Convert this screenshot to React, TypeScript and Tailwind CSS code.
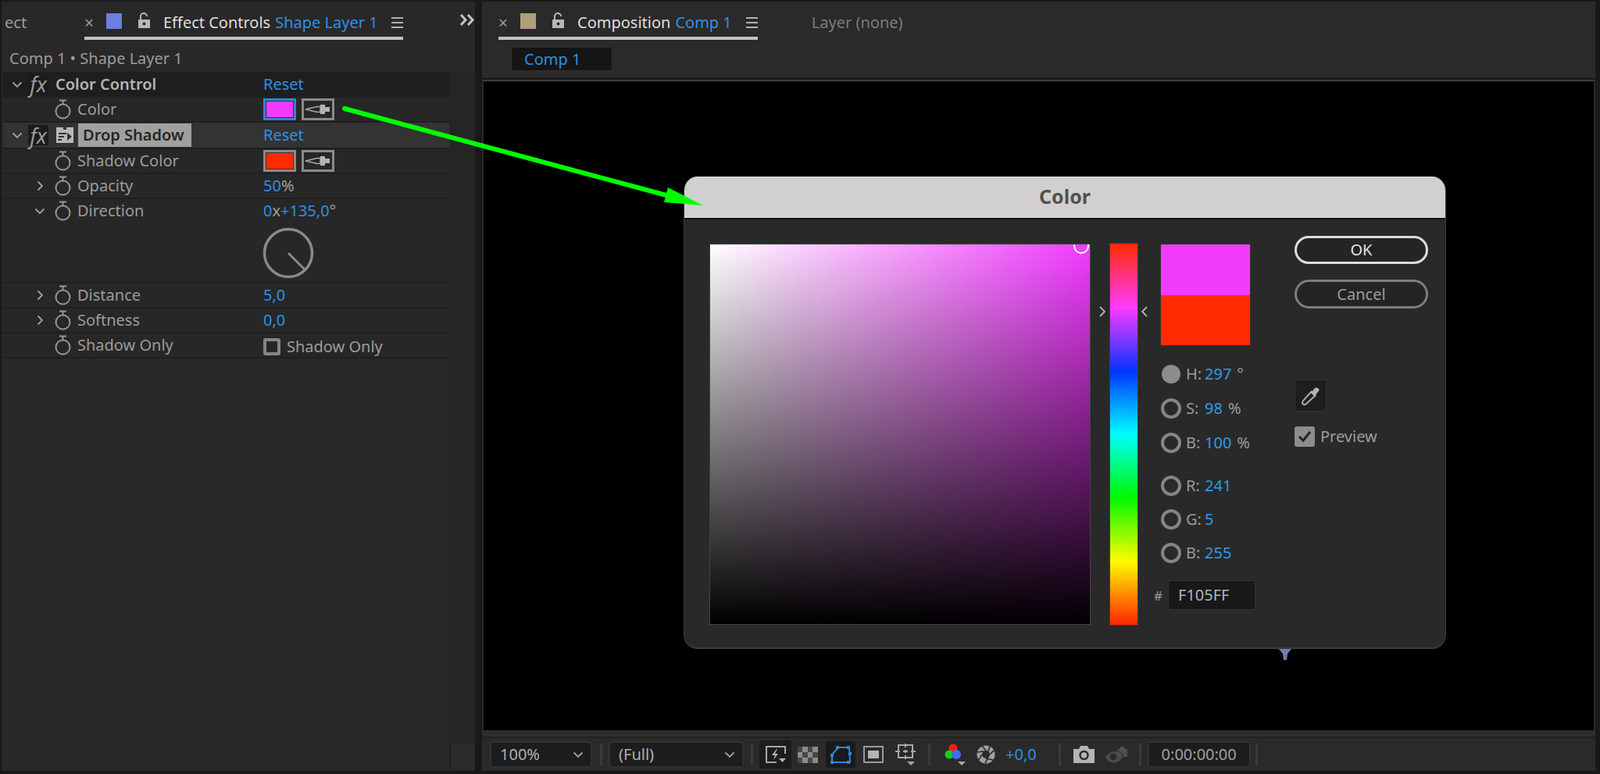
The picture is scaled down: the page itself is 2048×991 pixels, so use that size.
import type { ReactNode } from "react";

function Stopwatch() {
  return (
    <svg width="21" height="26" viewBox="0 0 21 26" fill="none" stroke="#979797" strokeWidth="2">
      <circle cx="10.5" cy="15.5" r="9" />
      <path d="M6 1.5h9M10.5 1.5v5" />
    </svg>
  );
}

function Chevron({ down }: { down?: boolean }) {
  return (
    <svg width="14" height="14" viewBox="0 0 14 14" fill="none" stroke="#a0a0a0" strokeWidth="1.8">
      {down ? <path d="M1.5 4.5 7 10l5.5-5.5" /> : <path d="M4.5 1.5 10 7l-5.5 5.5" />}
    </svg>
  );
}

function Fx() {
  return (
    <div className="w-[26px] h-[26px] bg-[#1b1b1b] flex items-center justify-center font-['Liberation_Serif',serif] italic text-[27px] leading-none text-[#9a9a9a]">
      fx
    </div>
  );
}

function Pipette() {
  return (
    <div className="w-[42px] h-[28px] border-[3px] border-[#8a8a8a] flex items-center justify-center">
      <svg width="34" height="18" viewBox="0 0 34 18" fill="none">
        <path d="M1 9 16 5.500h4v7h-4z" stroke="#a8a8a8" strokeWidth="1.5" />
        <path d="M20 3h6v3h6v6h-6v3h-6z" fill="#b4b4b4" />
      </svg>
    </div>
  );
}

function Swatch({ color, active }: { color: string; active?: boolean }) {
  const border = active ? "border-[#2d86d8]" : "border-[#8a8a8a]";
  return (
    <div className={`w-[42px] h-[28px] border-[3px] ${border}`}>
      <div className="w-full h-full border border-[#333]" style={{ background: color }} />
    </div>
  );
}

function Row({ h, bg, children }: { h: string; bg?: string; children: ReactNode }) {
  return <div className={`${h} ${bg ?? "bg-[#272727]"} border-b-2 border-[#1f1f1f] flex items-start shrink-0`}>{children}</div>;
}

function Prop({ label, chevron, h = "h-[32px]", children }: { label: string; chevron?: "right" | "down"; h?: string; children?: ReactNode }) {
  return (
    <Row h={h}>
      <div className="w-[66px] h-[30px] pl-[40px] flex items-center shrink-0">
        {chevron && <Chevron down={chevron === "down"} />}
      </div>
      <div className="w-[29px] h-[30px] flex items-center shrink-0">
        <Stopwatch />
      </div>
      <div className="w-[238px] h-[30px] flex items-center text-[#9c9c9c] shrink-0">{label}</div>
      <div className="h-[30px] flex items-center gap-[7px]">{children}</div>
    </Row>
  );
}

function Blue({ children }: { children: ReactNode }) {
  return <span className="text-[#2e90e4]">{children}</span>;
}

function EffectControls() {
  return (
    <div className="flex-1 flex flex-col min-h-0">
      <Row h="h-[33px]" bg="bg-[#1e1e1e]">
        <div className="w-[32px] h-[31px] pl-[11px] flex items-center shrink-0"><Chevron down /></div>
        <div className="w-[35px] h-[31px] flex items-center shrink-0"><Fx /></div>
        <div className="w-[266px] h-[31px] flex items-center font-semibold text-[#b4b4b4] shrink-0">Color Control</div>
        <div className="h-[31px] flex items-center"><Blue>Reset</Blue></div>
      </Row>
      <Prop label="Color">
        <Swatch color="#f23bfa" active />
        <Pipette />
      </Prop>
      <Row h="h-[34px]" bg="bg-[#333333]">
        <div className="w-[32px] h-[32px] pl-[11px] flex items-center shrink-0"><Chevron down /></div>
        <div className="w-[35px] h-[32px] flex items-center shrink-0"><Fx /></div>
        <div className="w-[29px] h-[32px] flex items-center shrink-0">
          <svg width="24" height="22" viewBox="0 0 24 22">
            <path d="M1 4V1h9v3h4V1h9v20H1z" fill="#b8b8b8" />
            <path d="M4 9h10M4 13h7M3 17h5" stroke="#333" strokeWidth="2" />
            <path d="m15 8 6 5-6 5z" fill="#333" />
          </svg>
        </div>
        <div className="w-[237px] h-[32px] flex items-center shrink-0">
          <div className="h-[30px] w-[145px] pl-[6px] bg-[#a0a0a0] text-[#262626] font-semibold whitespace-nowrap flex items-center">Drop Shadow</div>
        </div>
        <div className="h-[32px] flex items-center"><Blue>Reset</Blue></div>
      </Row>
      <Prop label="Shadow Color">
        <Swatch color="#ff2a00" />
        <Pipette />
      </Prop>
      <Prop label="Opacity" chevron="right"><span className="text-[#a0a0a0]"><Blue>50</Blue>%</span></Prop>
      <Prop label="Direction" chevron="down" h="h-[108px]">
        <div className="relative">
          <span className="text-[#a0a0a0]"><Blue>0</Blue>x<Blue>+135,0</Blue>°</span>
          <svg className="absolute left-[-1px] top-[31px]" width="66" height="66" viewBox="0 0 66 66" fill="none" stroke="#8a8a8a">
            <circle cx="33" cy="33" r="30.5" strokeWidth="3.5" />
            <path d="m33 33 21 21" strokeWidth="3" />
          </svg>
        </div>
      </Prop>
      <Prop label="Distance" chevron="right"><Blue>5,0</Blue></Prop>
      <Prop label="Softness" chevron="right"><Blue>0,0</Blue></Prop>
      <Prop label="Shadow Only">
        <div className="flex items-center gap-[8px] text-[#9c9c9c] pt-[3px]">
          <div className="w-[22px] h-[22px] rounded-[3px] border-[4px] border-[#858585]" />
          Shadow Only
        </div>
      </Prop>
    </div>
  );
}

function Lock() {
  return (
    <svg width="17" height="21" viewBox="0 0 17 21">
      <path d="M4 9V5a4 4 0 0 1 8 0" fill="none" stroke="#b8b8b8" strokeWidth="2" />
      <rect x="1" y="9" width="15" height="11" fill="#b8b8b8" />
      <circle cx="8.5" cy="14.5" r="2" fill="#2a2a2a" />
    </svg>
  );
}

function Hamburger() {
  return (
    <div className="w-[15px] flex flex-col gap-[4px]">
      <div className="h-[2px] bg-[#b0b0b0]" />
      <div className="h-[2px] bg-[#b0b0b0]" />
      <div className="h-[2px] bg-[#b0b0b0]" />
    </div>
  );
}

function Tab({ color, title, sub, gap, ml }: { color: string; title: string; sub: string; gap: string; ml: string }) {
  return (
    <div className={`h-[49px] ${ml} pt-[10px] pb-[1px] border-b-4 border-[#c2c2c2] flex items-center shrink-0`}>
      <span className="w-[28px] text-[#9a9a9a] text-[21px] leading-none">×</span>
      <div className="w-[20px] h-[20px] -mt-[5px] shrink-0" style={{ background: color }} />
      <div className="ml-[20px] -mt-[6px] shrink-0"><Lock /></div>
      <span className="ml-[16px] text-[#dedede] whitespace-nowrap">{title}</span>
      <span className="ml-[6px] text-[#2e90e4] whitespace-nowrap">{sub}</span>
      <div className={`${gap} shrink-0`}><Hamburger /></div>
    </div>
  );
}

function Sep({ ml }: { ml: string }) {
  return <div className={`${ml} w-[3px] h-[28px] bg-[#3a3a3a] shrink-0`} />;
}

function Dropdown({ w, ml, children }: { w: string; ml?: string; children: ReactNode }) {
  return (
    <div className={`${w} ${ml ?? ""} h-[34px] rounded-[4px] bg-[#1d1d1d] border-2 border-[#313131] pl-[11px] pr-[9px] flex items-center justify-between text-[#b0b0b0] shrink-0`}>
      {children}
      <Chevron down />
    </div>
  );
}

function Toolbar() {
  return (
    <div className="h-[42px] pl-[10px] flex items-center shrink-0">
      <Dropdown w="w-[131px]">100%</Dropdown>
      <Sep ml="ml-[10px]" />
      <Dropdown w="w-[173px]" ml="ml-[8px]">(Full)</Dropdown>
      <Sep ml="ml-[9px]" />
      <div className="ml-[8px] w-[41px] h-[36px] rounded-[3px] bg-[#1c1c1c] flex items-center justify-center shrink-0">
        <svg width="28" height="24" viewBox="0 0 28 24" fill="none">
          <path d="M26 11V2H2v20h13" stroke="#a8a8a8" strokeWidth="2" />
          <path d="M15 5 9 13h4l-2 6 6-8h-4l3-6z" fill="#b4b4b4" />
          <path d="M18 17h9l-4.5 5z" fill="#b4b4b4" />
        </svg>
      </div>
      <svg className="ml-[8px] shrink-0" width="26" height="21" viewBox="0 0 26 21">
        <rect width="26" height="21" fill="#8c8c8c" />
        <path d="M0 0h6v7H0zM13 0h6v7h-6zM6 7h7v7H6zM19 7h7v7h-7zM0 14h6v7H0zM13 14h6v7h-6z" fill="#484848" />
      </svg>
      <div className="ml-[10px] w-[38px] h-[34px] rounded-[3px] bg-[#1a1a1a] flex items-center justify-center shrink-0">
        <svg width="28" height="24" viewBox="0 0 28 24" fill="none">
          <path d="M11 3h14l1 19H3V12z" stroke="#2d86d8" strokeWidth="2" />
          <path d="M8 1h4v4H8zM22 1h4v4h-4zM24 9h4v4h-4zM1 20h4v4H1zM22 20h4v4h-4zM1 11h4v4H1z" fill="#2d86d8" />
        </svg>
      </div>
      <svg className="ml-[10px] shrink-0" width="26" height="22" viewBox="0 0 26 22">
        <rect x="1" y="1" width="24" height="20" fill="none" stroke="#9a9a9a" strokeWidth="2" />
        <rect x="6" y="6" width="14" height="10" fill="#b4b4b4" />
      </svg>
      <svg className="ml-[15px] shrink-0" width="28" height="28" viewBox="0 0 28 28" fill="none" stroke="#a8a8a8" strokeWidth="2">
        <path d="M4 2h18v16H4z" />
        <path d="M0 10h6M20 10h6M13 0v5M13 15v5M10 10h6M13 8v4" />
        <path d="M15 23h10l-5 5z" fill="#a8a8a8" stroke="none" />
      </svg>
      <Sep ml="ml-[14px]" />
      <svg className="ml-[18px] shrink-0" width="30" height="30" viewBox="0 0 30 30">
        <circle cx="11" cy="7" r="5.5" fill="#f02010" />
        <circle cx="6" cy="15" r="5.5" fill="#10d010" />
        <circle cx="15" cy="15" r="6" fill="#3c6cf0" />
        <path d="M17 24h10l-5 5z" fill="#a8a8a8" />
      </svg>
      <svg className="ml-[11px] shrink-0" width="24" height="24" viewBox="0 0 24 24" fill="none">
        <circle cx="12" cy="12" r="11.5" fill="#a0a0a0" />
        <circle cx="12" cy="12" r="5" fill="#2a2a2a" />
        <path d="M12 7 7 1M17 12l6-6M12 17l9 2M7 12 2 20M9 8 1 9M15 16l-4 7M15 8l2-7" stroke="#2a2a2a" strokeWidth="1.6" />
      </svg>
      <span className="ml-[13px] text-[#2e90e4]">+0,0</span>
      <Sep ml="ml-[28px]" />
      <svg className="ml-[16px] shrink-0" width="27" height="22" viewBox="0 0 27 22">
        <path d="M0 4h7l2-4h9l2 4h7v18H0z" fill="#b4b4b4" />
        <circle cx="13.5" cy="12" r="5" fill="none" stroke="#2a2a2a" strokeWidth="2.5" />
      </svg>
      <svg className="ml-[13px] shrink-0" width="29" height="24" viewBox="0 0 29 24">
        <path d="M16 5h3l1.500-3h4L26 5h3v10H16z" fill="#505050" />
        <path d="M0 15Q9 5 19 8q4 2 5 7-5 8-13 8-7 0-11-8z" fill="#4a4a4a" stroke="#2a2a2a" />
        <circle cx="11" cy="15" r="4" fill="#2a2a2a" />
      </svg>
      <Sep ml="ml-[15px]" />
      <div className="ml-[8px] w-[132px] h-[34px] rounded-[4px] bg-[#1d1d1d] border-2 border-[#313131] flex items-center justify-center text-[#a0a0a0] shrink-0">0:00:00:00</div>
      <Sep ml="ml-[6px]" />
    </div>
  );
}

function Radio({ letter, value, unit, on }: { letter: string; value: string; unit?: string; on?: boolean }) {
  return (
    <div className="h-[26px] flex items-center shrink-0">
      {on ? (
        <div className="w-[24px] h-[24px] mx-[1px] rounded-full bg-[#8c8c8c] shrink-0" />
      ) : (
        <div className="w-[26px] h-[26px] rounded-full border-[4px] border-[#858585] shrink-0" />
      )}
      <span className="ml-[6px] w-[24px] text-[#9c9c9c] shrink-0">{letter}:</span>
      <span className="text-[#2e9be8]">{value}</span>
      {unit && <span className="ml-[7px] text-[#9c9c9c]">{unit}</span>}
    </div>
  );
}

function ColorDialog() {
  return (
    <div className="absolute left-[875px] top-[226px] w-[976px] h-[605px] rounded-[18px] overflow-hidden bg-[#292929] border-b-2 border-x border-[#3a3a3a] flex flex-col">
      <div className="h-[55px] bg-[#d1d0ce] border-b-2 border-[#111] pb-[2px] flex items-center justify-center font-['Liberation_Sans',sans-serif] font-bold text-[25px] text-[#505050] shrink-0">
        Color
      </div>
      <div className="flex-1 flex items-start">
        <div className="relative ml-[32px] mt-[31px] w-[488px] h-[488px] shrink-0 overflow-hidden border border-[#444] bg-[linear-gradient(to_top,#000,transparent),linear-gradient(to_right,#fff,#f23bff)]">
          <div className="absolute right-[1px] top-[-8px] w-[20px] h-[20px] rounded-full border-2 border-white" />
        </div>
        <div className="relative ml-[25px] mt-[31px] w-[35px] h-[488px] shrink-0 outline outline-[#3c3c3c] bg-[linear-gradient(#ff2a00,#ff3bff,#0433ff,#00fdff,#00f900,#fffb00,#ff2600)]">
          <svg className="absolute left-[-14px] top-[80px]" width="8" height="14" viewBox="0 0 8 14" fill="none" stroke="#b4b4b4" strokeWidth="1.8"><path d="m1 1 6 6-6 6" /></svg>
          <svg className="absolute right-[-13px] top-[80px]" width="8" height="14" viewBox="0 0 8 14" fill="none" stroke="#b4b4b4" strokeWidth="1.8"><path d="M7 1 1 7l6 6" /></svg>
        </div>
        <div className="ml-[30px] mt-[32px] w-[145px] flex flex-col shrink-0">
          <div className="w-[114px] h-[129px] outline outline-[#333] flex flex-col">
            <div className="flex-1 bg-[#f23bfd]" />
            <div className="flex-1 bg-[#ff2a00]" />
          </div>
          <div className="mt-[24px] flex flex-col gap-[18px]">
            <Radio letter="H" value="297" unit="°" on />
            <Radio letter="S" value="98" unit="%" />
            <Radio letter="B" value="100" unit="%" />
          </div>
          <div className="mt-[29px] flex flex-col gap-[17px]">
            <Radio letter="R" value="241" />
            <Radio letter="G" value="5" />
            <Radio letter="B" value="255" />
          </div>
          <div className="mt-[22px] -ml-[9px] flex items-center gap-[7px]">
            <span className="w-[11px] text-[#9c9c9c] text-[17px]">#</span>
            <div className="w-[112px] h-[38px] rounded-[3px] bg-[#181818] border border-[#333] pl-[12px] flex items-center text-[#b4b4b4]">F105FF</div>
          </div>
        </div>
        <div className="ml-[26px] mt-[21px] w-[171px] flex flex-col shrink-0">
          <div className="h-[36px] rounded-full bg-[#242424] border-[3px] border-[#dcdcdc] flex items-center justify-center text-[#e4e4e4]">OK</div>
          <div className="mt-[20px] h-[37px] rounded-full bg-[#242424] border-[3px] border-[#7e7e7e] flex items-center justify-center text-[#9c9c9c]">Cancel</div>
          <div className="mt-[91px] w-[41px] h-[41px] rounded-[3px] bg-[#1e1e1e] border border-[#333] flex items-center justify-center">
            <svg width="28" height="28" viewBox="0 0 28 28" fill="none">
              <path d="M15 8 4 20q-2 3 0 4.500 2 1.500 4-.500L20 13" stroke="#aaa" strokeWidth="2" />
              <path d="m13 9 6 6 2-2-1-1 3-3q3-3 0-5t-5 1l-2 3-1-1z" fill="#b4b4b4" />
            </svg>
          </div>
          <div className="mt-[19px] flex items-center gap-[7px]">
            <div className="w-[26px] h-[26px] rounded-[3px] bg-[#8c8c8c] flex items-center justify-center">
              <svg width="18" height="16" viewBox="0 0 18 16" fill="none" stroke="#222" strokeWidth="3"><path d="m2 8 5 5 9-11" /></svg>
            </div>
            <span className="text-[#9c9c9c]">Preview</span>
          </div>
        </div>
      </div>
    </div>
  );
}

export default function App() {
  return (
    <div className="relative w-[2048px] h-[991px] overflow-hidden bg-[#191919] pl-[2px] pr-[6px] pt-[2px] pb-[4px] flex font-['Open_Sans',sans-serif] text-[20px] leading-none">
      {/* effect controls */}
      <div className="w-[606px] bg-[#282828] flex flex-col shrink-0">
        <div className="h-[49px] flex items-start shrink-0">
          <span className="ml-[4px] w-[100px] pt-[17px] text-[#9c9c9c]">ect</span>
          <div className="ml-[2px]"><Tab color="#6b7fe0" title="Effect Controls" sub="Shape Layer 1" gap="ml-[17px]" ml="" /></div>
          <svg className="ml-[72px] mt-[16px] shrink-0" width="20" height="15" viewBox="0 0 20 15" fill="none" stroke="#c4c4c4" strokeWidth="3"><path d="m2 1 6 6.500L2 14M11 1l6 6.500-6 6.500" /></svg>
        </div>
        <div className="h-[41px] pl-[10px] pt-[14px] text-[#9c9c9c] shrink-0">Comp 1 • Shape Layer 1</div>
        <div className="flex-1 pl-[2px] flex min-h-0">
          <EffectControls />
          <div className="w-[33px] flex flex-col shrink-0">
            <div className="flex-1 bg-[#252525]" />
            <div className="h-[33px] mb-[2px] bg-[#2b2b2b] border-l-2 border-[#1f1f1f]" />
          </div>
        </div>
      </div>
      <div className="w-[9px] shrink-0" />
      {/* composition */}
      <div className="flex-1 bg-[#2a2a2a] flex flex-col min-w-0">
        <div className="h-[49px] flex items-start shrink-0">
          <Tab color="#b09f7c" title="Composition" sub="Comp 1" gap="ml-[18px]" ml="ml-[21px]" />
          <span className="ml-[69px] pt-[17px] text-[#7c7c7c]">Layer (none)</span>
        </div>
        <div className="h-[49px] pl-[37px] pt-[9px] shrink-0">
          <div className="w-[130px] h-[31px] rounded-[3px] bg-[#151515] border border-[#2f2f2f] pl-[16px] flex items-center text-[#2e90e4]">Comp 1</div>
        </div>
        <div className="h-[5px] border-t-2 border-[#151515] bg-[#3a3a3a] border-b border-b-[#111] shrink-0" />
        <div className="flex-1 ml-[2px] mr-[2px] bg-black" />
        <div className="h-[10px] bg-[#2d2d2d] border-b-2 border-[#202020] shrink-0" />
        <Toolbar />
      </div>
      <svg className="absolute left-[1630px] top-[830px]" width="30" height="16" viewBox="0 0 30 16">
        <path d="M6 0h18l-6 7-1 8h-4l-1-8z" fill="#6f7fb0" />
      </svg>
      <ColorDialog />
      <svg className="absolute left-0 top-0 pointer-events-none" width="2048" height="991" viewBox="0 0 2048 991">
        <path d="M441 139 853 250" stroke="#00ff00" strokeWidth="6" strokeLinecap="round" />
        <path d="M900 263 855 240 850 259z" fill="#00ff00" />
      </svg>
    </div>
  );
}
